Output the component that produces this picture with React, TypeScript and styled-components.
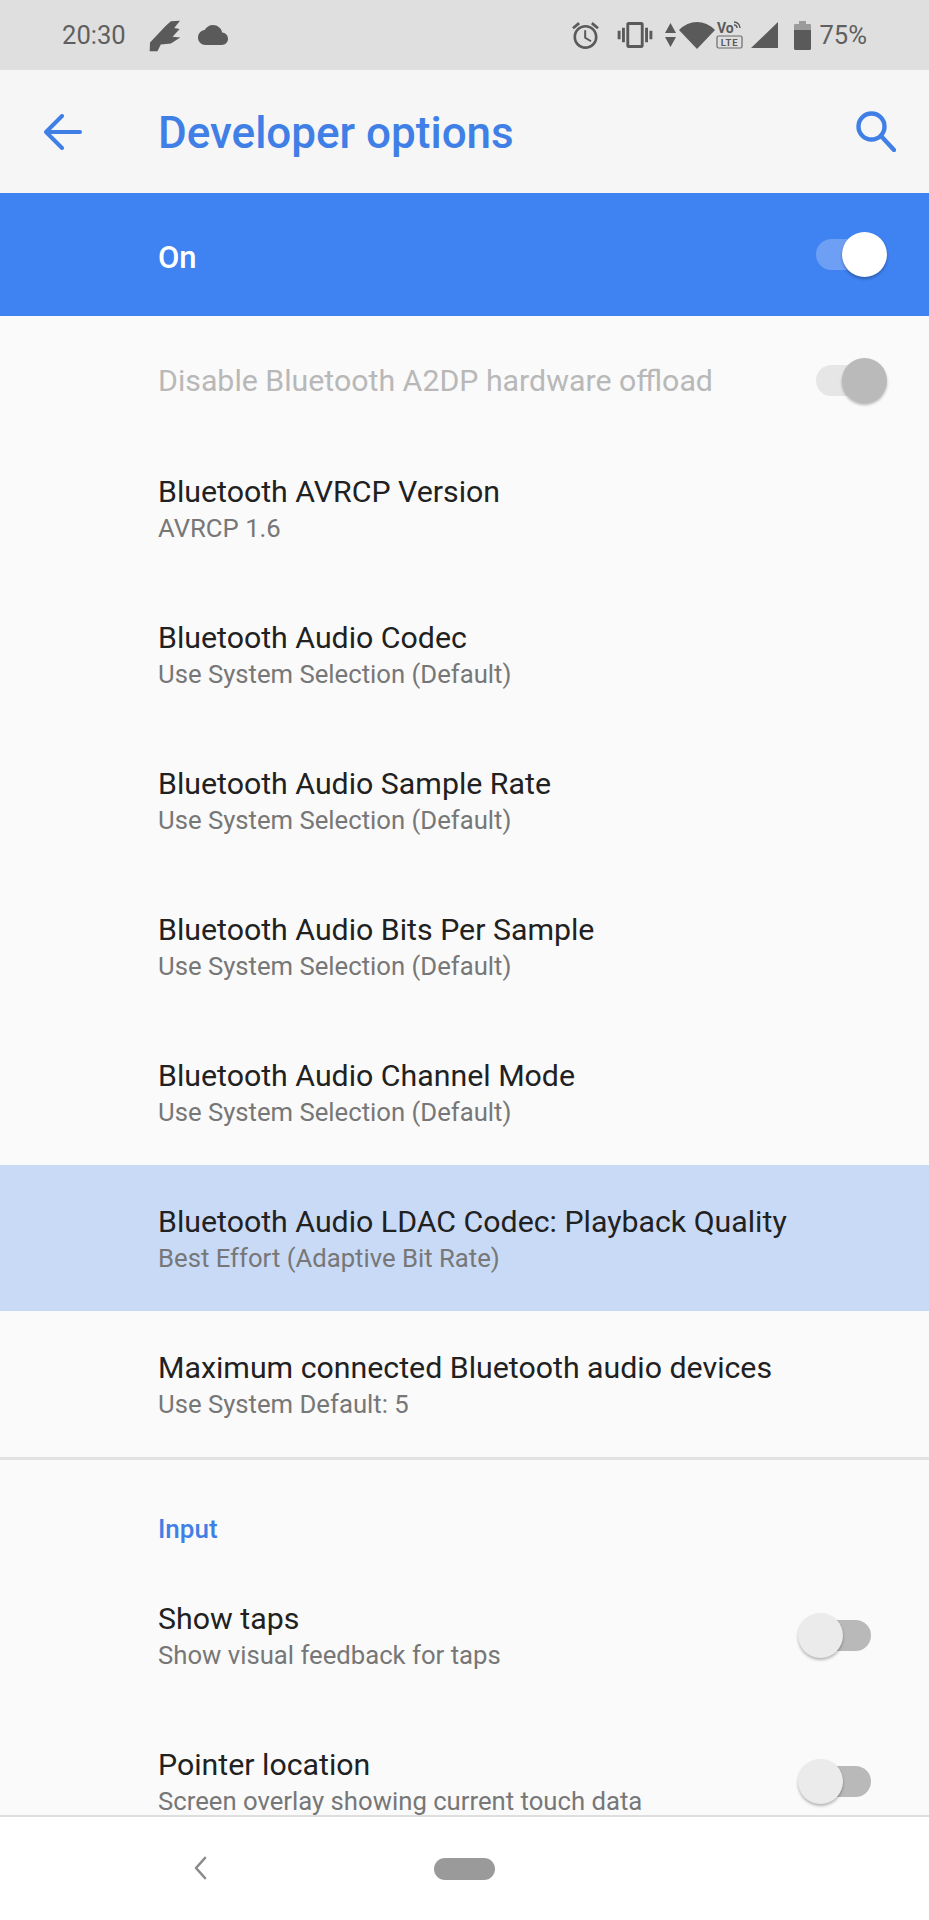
import styled, { createGlobalStyle } from 'styled-components';

const GlobalStyle = createGlobalStyle`
  html, body {
    margin: 0;
    padding: 0;
    background: #fafafa;
    font-family: Roboto, 'Liberation Sans', sans-serif;
  }
`;

const Screen = styled.div`
  width: 929px;
  height: 1920px;
  display: flex;
  flex-direction: column;
  overflow: hidden;
  background: #fafafa;
`;

const StatusBar = styled.div`
  flex: 0 0 70px;
  display: flex;
  align-items: center;
  padding: 0 62px;
  background: #dfdfdf;
`;

const StatusText = styled.span<{ $gap?: number }>`
  margin-left: ${(props) => props.$gap ?? 0}px;
  font-size: 25.6px;
  color: #5f5f5f;
`;

const StatusIcons = styled.div`
  margin-left: auto;
  display: flex;
  align-items: center;
`;

const Glyph = styled.svg<{ $gap?: number }>`
  display: block;
  flex: none;
  margin-left: ${(props) => props.$gap ?? 0}px;
  fill: #5a5a5a;
`;

const Toolbar = styled.header`
  flex: 0 0 123px;
  display: flex;
  align-items: center;
  padding: 0 33px 0 44px;
  background: #f6f6f6;
`;

const Title = styled.h1`
  margin: 2px 0 0 76px;
  flex: 1;
  font-size: 44px;
  font-weight: 500;
  color: #4080e6;
`;

const MasterBar = styled.div`
  flex: 0 0 123px;
  display: flex;
  align-items: center;
  justify-content: space-between;
  padding: 0 49px 0 158px;
  background: #3f82f1;
  color: #fff;
  font-size: 31px;
  font-weight: 500;
`;

const MasterLabel = styled.span`
  padding-top: 5px;
`;

const List = styled.main`
  flex: 1;
  min-height: 0;
  overflow: hidden;
`;

const Row = styled.div<{ $highlight?: boolean; $height?: number; $right?: number; $top?: number }>`
  height: ${(props) => props.$height ?? 146}px;
  box-sizing: border-box;
  display: flex;
  align-items: center;
  justify-content: space-between;
  padding: ${(props) => props.$top ?? 0}px ${(props) => props.$right ?? 58}px 0 158px;
  background: ${(props) => (props.$highlight ? '#c9daf6' : 'transparent')};
`;

const RowText = styled.div`
  display: flex;
  flex-direction: column;
  padding-top: 3px;
`;

const RowTitle = styled.div<{ $disabled?: boolean }>`
  font-size: 30.3px;
  line-height: 37px;
  color: ${(props) => (props.$disabled ? '#b8b8b8' : '#212121')};
`;

const RowSummary = styled.div`
  font-size: 25.7px;
  line-height: 37px;
  color: #777;
`;

const Divider = styled.div`
  height: 3px;
  background: #e2e2e2;
`;

const SectionHeader = styled.div`
  height: 102px;
  padding: 53px 0 0 158px;
  box-sizing: border-box;
  font-size: 26px;
  line-height: 32px;
  font-weight: 500;
  color: #4080e6;
`;

type SwitchTone = 'master' | 'disabled' | 'off';

const SwitchTrack = styled.div<{ $tone: SwitchTone }>`
  position: relative;
  flex: none;
  width: 64px;
  height: 31px;
  border-radius: 16px;
  background: ${(props) =>
    props.$tone === 'master' ? '#6d9ff5' : props.$tone === 'disabled' ? '#e6e6e6' : '#b9b9b9'};
`;

const SwitchThumb = styled.div<{ $tone: SwitchTone }>`
  position: absolute;
  top: -7px;
  width: 45px;
  height: 45px;
  border-radius: 50%;
  ${(props) => (props.$tone === 'off' ? 'left: -9px;' : 'right: -7px;')}
  background: ${(props) =>
    props.$tone === 'master' ? '#fff' : props.$tone === 'disabled' ? '#bababa' : '#ebebeb'};
  box-shadow: 0 2px 3px rgba(0, 0, 0, 0.28);
`;

const NavBar = styled.nav`
  flex: 0 0 103px;
  position: relative;
  display: flex;
  align-items: center;
  justify-content: center;
  border-top: 2px solid #dedede;
  background: #fff;
`;

const NavBack = styled.svg`
  position: absolute;
  left: 192px;
  top: 39px;
`;

const HomePill = styled.div`
  width: 61px;
  height: 22px;
  border-radius: 11px;
  background: #9a9a9a;
`;

const Switch = ({ tone }: { tone: SwitchTone }) => (
  <SwitchTrack $tone={tone}>
    <SwitchThumb $tone={tone} />
  </SwitchTrack>
);

const settings = [
  { title: 'Bluetooth AVRCP Version', summary: 'AVRCP 1.6' },
  { title: 'Bluetooth Audio Codec', summary: 'Use System Selection (Default)' },
  { title: 'Bluetooth Audio Sample Rate', summary: 'Use System Selection (Default)' },
  { title: 'Bluetooth Audio Bits Per Sample', summary: 'Use System Selection (Default)' },
  { title: 'Bluetooth Audio Channel Mode', summary: 'Use System Selection (Default)' },
  {
    title: 'Bluetooth Audio LDAC Codec: Playback Quality',
    summary: 'Best Effort (Adaptive Bit Rate)',
    highlight: true,
  },
  { title: 'Maximum connected Bluetooth audio devices', summary: 'Use System Default: 5' },
];

const inputSettings = [
  { title: 'Show taps', summary: 'Show visual feedback for taps' },
  { title: 'Pointer location', summary: 'Screen overlay showing current touch data' },
];

export default function App() {
  return (
    <Screen>
      <GlobalStyle />
      <StatusBar>
        <StatusText>20:30</StatusText>
        <Glyph $gap={23} width="32" height="33" viewBox="60 55 95 98">
          <path d="M63 125 110 75 125 62 152 60 135 82 151 85 130 108 153 110 125 128 95 131 85 151 62 151Z" />
        </Glyph>
        <Glyph $gap={17} width="30" height="20" viewBox="0 4 24 16">
          <path d="M19.35 10.04C18.67 6.59 15.64 4 12 4 9.11 4 6.6 5.64 5.35 8.04 2.34 8.36 0 10.91 0 14c0 3.31 2.69 6 6 6h13c2.76 0 5-2.24 5-5 0-2.64-2.05-4.78-4.65-4.96z" />
        </Glyph>
        <StatusIcons>
          <Glyph width="27" height="27" viewBox="2 1.8 20 20.2">
            <path d="M22 5.72l-4.6-3.86-1.29 1.53 4.6 3.86L22 5.72zM7.88 3.39L6.6 1.86 2 5.71l1.29 1.53 4.59-3.85zM12.5 8H11v6l4.75 2.85.75-1.23-4-2.37V8zM12 4c-4.97 0-9 4.03-9 9s4.02 9 9 9c4.97 0 9-4.03 9-9s-4.03-9-9-9zm0 16c-3.87 0-7-3.13-7-7s3.13-7 7-7 7 3.13 7 7-3.13 7-7 7z" />
          </Glyph>
          <Glyph $gap={18} width="36" height="26" viewBox="0 3 24 18">
            <path d="M0 15h2V9H0v6zm3 2h2V7H3v10zm19-8v6h2V9h-2zm-3 8h2V7h-2v10zM16.5 3h-9C6.67 3 6 3.67 6 4.5v15c0 .83.67 1.5 1.5 1.5h9c.83 0 1.5-.67 1.5-1.5v-15c0-.83-.67-1.5-1.5-1.5zM16 19H8V5h8v14z" />
          </Glyph>
          <Glyph $gap={12} width="11" height="24" viewBox="0 0 11 24">
            <path d="M5.5 0 11 10H0ZM0 14H11L5.5 24Z" />
          </Glyph>
          <Glyph $gap={3} width="36" height="27" viewBox="0 0 36 27">
            <path d="M0 8Q8 0 18 0T36 8L18 27Z" />
          </Glyph>
          <Glyph $gap={1} width="27" height="28" viewBox="0 0 27 28">
            <text x="1" y="12" fontFamily="Roboto, sans-serif" fontSize="14" fontWeight="700">
              Vo
            </text>
            <path d="M18 1a6 6 0 0 1 6 6M18 4a3 3 0 0 1 3 3" fill="none" stroke="#5a5a5a" strokeWidth="1.4" />
            <rect x="1" y="15" width="25" height="12" rx="1.5" fill="none" stroke="#6a6a6a" strokeWidth="1.2" />
            <text x="13.5" y="24.5" textAnchor="middle" fontFamily="Roboto, sans-serif" fontSize="9.5" fontWeight="700" letterSpacing="0.8">
              LTE
            </text>
          </Glyph>
          <Glyph $gap={8} width="27" height="26" viewBox="0 0 27 26">
            <path d="M27 0V26H0Z" />
          </Glyph>
          <Glyph $gap={16} width="17" height="29" viewBox="0 0 17 29">
            <path d="M5 0H12V3H16Q17 3 17 4V9H0V4Q0 3 1 3H5Z" fill="#9b9b9b" />
            <path d="M0 9H17V27.5Q17 29 15.5 29H1.5Q0 29 0 27.5Z" />
          </Glyph>
          <StatusText $gap={8}>75%</StatusText>
        </StatusIcons>
      </StatusBar>

      <Toolbar>
        <svg width="38" height="36" viewBox="0 0 38 36" fill="none" stroke="#4080e6" strokeWidth="4" strokeLinecap="round" strokeLinejoin="round">
          <path d="M36 18H3M18 2 2 18 18 34" />
        </svg>
        <Title>Developer options</Title>
        <svg width="40" height="41" viewBox="0 0 40 41" fill="none" stroke="#4080e6" strokeWidth="4.4" strokeLinecap="round">
          <circle cx="15.5" cy="15.5" r="13" />
          <path d="M25 25 38 39" />
        </svg>
      </Toolbar>

      <MasterBar>
        <MasterLabel>On</MasterLabel>
        <Switch tone="master" />
      </MasterBar>

      <List>
        <Row $height={119} $right={49} $top={9}>
          <RowTitle $disabled>Disable Bluetooth A2DP hardware offload</RowTitle>
          <Switch tone="disabled" />
        </Row>
        {settings.map((item) => (
          <Row key={item.title} $highlight={item.highlight}>
            <RowText>
              <RowTitle>{item.title}</RowTitle>
              <RowSummary>{item.summary}</RowSummary>
            </RowText>
          </Row>
        ))}
        <Divider />
        <SectionHeader>Input</SectionHeader>
        {inputSettings.map((item) => (
          <Row key={item.title}>
            <RowText>
              <RowTitle>{item.title}</RowTitle>
              <RowSummary>{item.summary}</RowSummary>
            </RowText>
            <Switch tone="off" />
          </Row>
        ))}
      </List>

      <NavBar>
        <NavBack width="16" height="24" viewBox="0 0 16 24" fill="none" stroke="#8a8a8a" strokeWidth="2.6" strokeLinecap="round" strokeLinejoin="round">
          <path d="M13 2 4 12 13 22" />
        </NavBack>
        <HomePill />
      </NavBar>
    </Screen>
  );
}
